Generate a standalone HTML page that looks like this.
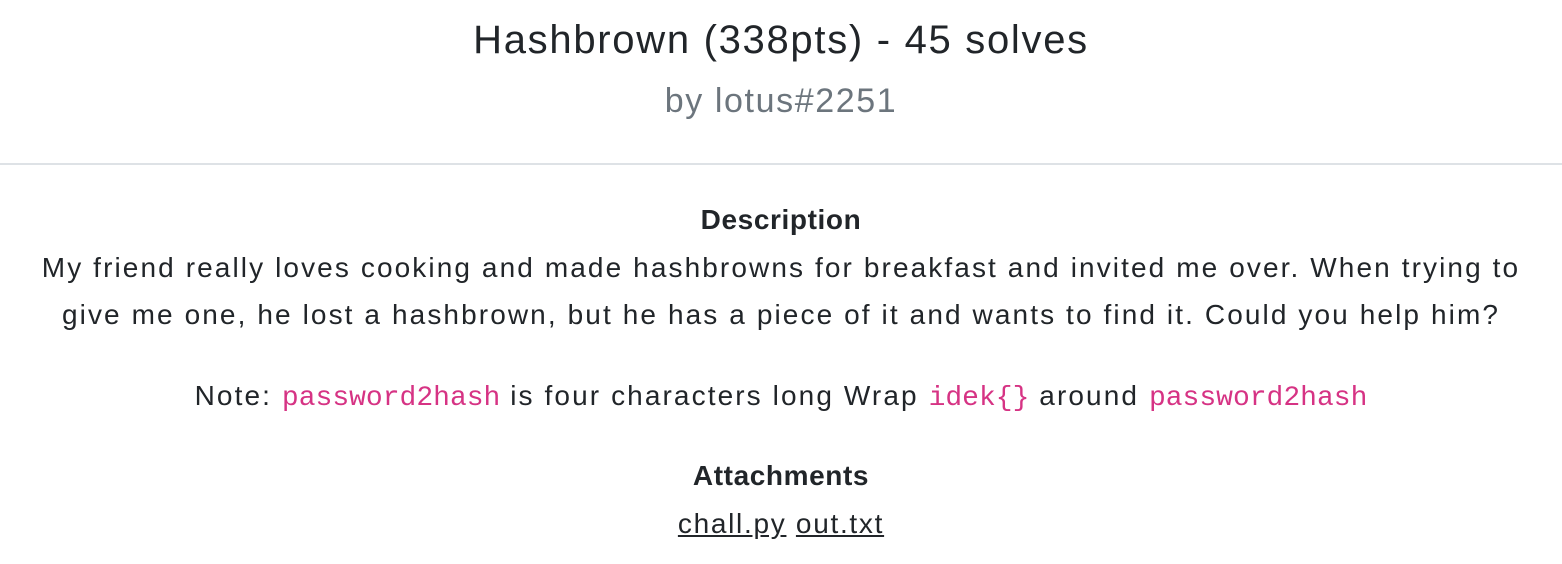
<!DOCTYPE html>
<html><head><meta charset="utf-8"><style>
body{margin:0;width:1562px;height:564px;background:#fff;font-family:"Liberation Sans",sans-serif;color:#212529;overflow:hidden}
.t{position:absolute;left:0;width:1562px;text-align:center;white-space:nowrap}
h1{font-weight:normal;font-size:40px;margin:0;top:18px;letter-spacing:1.7px}
.by{top:82px;font-size:34px;color:#6c757d;letter-spacing:1.6px}
.hr{position:absolute;top:163px;left:0;width:1562px;height:2px;background:#dee2e6}
.b{font-size:28px;line-height:47px;letter-spacing:2.1px}
.h{font-weight:bold;letter-spacing:0.6px}
code{font-family:"Liberation Mono",monospace;color:#d63384;font-size:28px;letter-spacing:0}
a{color:#212529;text-decoration:underline}
</style></head><body>
<h1 class="t">Hashbrown (338pts) - 45 solves</h1>
<div class="t by">by lotus#2251</div>
<div class="hr"></div>
<div class="t b h" style="top:196px">Description</div>
<div class="t b" style="top:244px">My friend really loves cooking and made hashbrowns for breakfast and invited me over. When trying to<br>give me one, he lost a hashbrown, but he has a piece of it and wants to find it. Could you help him?</div>
<div class="t b" style="top:372px">Note: <code>password2hash</code> is four characters long Wrap <code>idek{}</code> around <code>password2hash</code></div>
<div class="t b h" style="top:452px">Attachments</div>
<div class="t b" style="top:500px;letter-spacing:1.7px"><a>chall.py</a> <a>out.txt</a></div>
</body></html>
